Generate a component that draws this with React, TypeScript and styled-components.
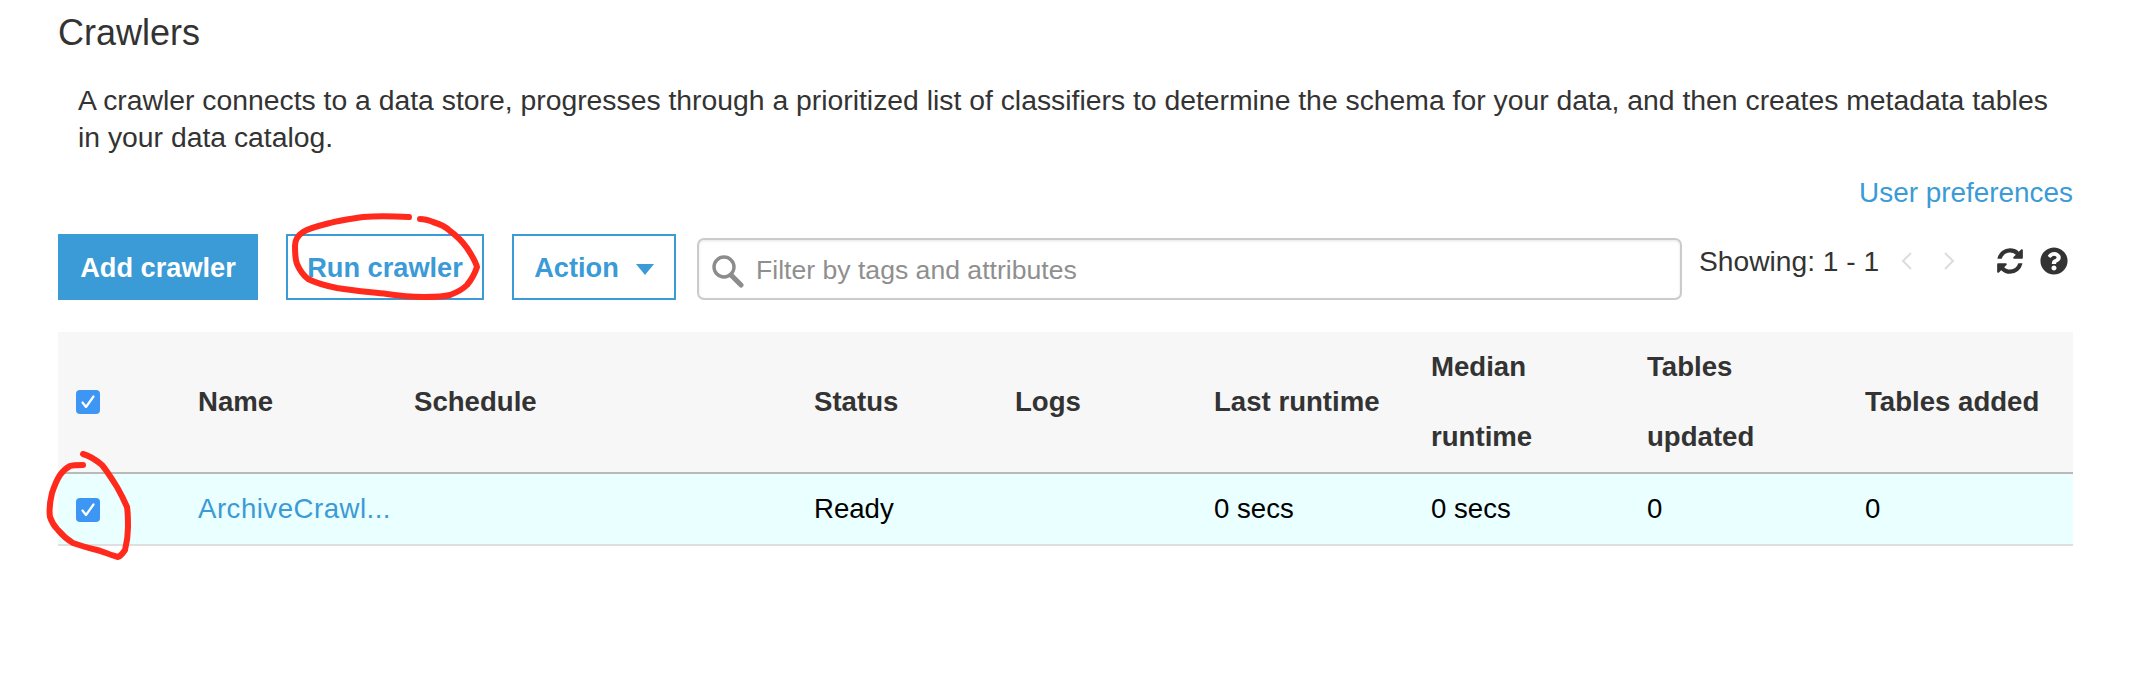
import React from "react";
import styled, { createGlobalStyle } from "styled-components";
import { FaQuestionCircle } from "react-icons/fa";

const BLUE = "#3a9bd6";
const COLUMNS = "140px 216px 400px 201px 199px 217px 216px 218px 208px";

const GlobalStyle = createGlobalStyle`
  html, body {
    margin: 0;
    background: #fff;
  }
  body {
    font-family: "Liberation Sans", Arial, sans-serif;
    font-size: 27.6px;
    color: #333;
  }
`;

const Page = styled.div`
  position: relative;
  box-sizing: border-box;
  width: 2132px;
  height: 686px;
  padding: 13px 59px 0 58px;
  overflow: hidden;
`;

const Title = styled.h1`
  margin: 0;
  font-size: 36px;
  font-weight: 400;
  line-height: 40px;
`;

const Description = styled.p`
  max-width: 1985px;
  margin: 29px 0 0 20px;
  font-size: 28.34px;
  line-height: 37px;
`;

const PrefsRow = styled.div`
  display: flex;
  justify-content: flex-end;
  margin-top: 18px;
  font-size: 27.9px;
  line-height: 37px;
`;

const TextLink = styled.a<{ $spread?: boolean }>`
  color: ${BLUE};
  text-decoration: none;
  letter-spacing: ${(p) => (p.$spread ? "0.5px" : "0")};
`;

const Toolbar = styled.div`
  display: flex;
  align-items: flex-start;
  height: 66px;
  margin-top: 23px;
`;

const Button = styled.button<{ $primary?: boolean; $width: number; $gap: number }>`
  box-sizing: border-box;
  display: flex;
  align-items: center;
  justify-content: center;
  gap: 17px;
  width: ${(p) => p.$width}px;
  height: 66px;
  margin: 0 ${(p) => p.$gap}px 0 0;
  padding: 2px 0 0;
  font: bold 27.2px "Liberation Sans", Arial, sans-serif;
  color: ${(p) => (p.$primary ? "#fff" : BLUE)};
  background: ${(p) => (p.$primary ? BLUE : "#fff")};
  border: 2px solid ${BLUE};
`;

const Caret = styled.span`
  width: 0;
  height: 0;
  margin-top: 2px;
  border-left: 9.5px solid transparent;
  border-right: 9.5px solid transparent;
  border-top: 11px solid ${BLUE};
`;

const SearchBox = styled.div`
  box-sizing: border-box;
  display: flex;
  align-items: center;
  gap: 11px;
  width: 985px;
  height: 62px;
  margin-top: 4px;
  padding: 2px 0 0 12px;
  border: 2px solid #cbcbcb;
  border-radius: 7px;
  box-shadow: inset 0 1px 3px rgba(0, 0, 0, 0.1);
  color: #8f8f8f;
  font-size: 26.6px;
`;

const SearchIcon = styled.svg`
  width: 34px;
  height: 34px;
  flex: none;
  margin-top: 2px;
`;

const Pager = styled.div`
  display: flex;
  align-items: center;
  height: 54px;
  margin-left: 17px;
`;

const Showing = styled.span`
  margin-right: 22px;
  font-size: 28.2px;
`;

const Chevron = styled.svg<{ $gap: number }>`
  width: 11px;
  height: 18px;
  margin-right: ${(p) => p.$gap}px;
  flex: none;
`;

const Tool = styled.span<{ $gap: number }>`
  display: flex;
  margin-right: ${(p) => p.$gap}px;
  color: #333;
  font-size: 28px;
`;

const RefreshIcon = styled.svg`
  width: 30px;
  height: 30px;
  fill: #333;
`;

const TableRow = styled.div<{ $head?: boolean }>`
  box-sizing: border-box;
  display: grid;
  grid-template-columns: ${COLUMNS};
  align-items: center;
  width: 2015px;
  height: ${(p) => (p.$head ? 142 : 72)}px;
  margin-top: ${(p) => (p.$head ? 32 : 0)}px;
  padding-bottom: ${(p) => (p.$head ? 1 : 0)}px;
  background: ${(p) => (p.$head ? "#f7f7f7" : "#eaffff")};
  border-bottom: 2px solid ${(p) => (p.$head ? "#b9b9b9" : "#dfdfdf")};
`;

const HeadCell = styled.div`
  font-weight: bold;
  font-size: 27.6px;
  line-height: 70px;
  color: #333;
`;

const Cell = styled.div`
  color: #000;
`;

const CheckCell = styled.div<{ $drop?: number }>`
  display: flex;
  padding: ${(p) => p.$drop ?? 0}px 0 0 18px;
`;

const CheckBox = styled.span`
  display: flex;
  align-items: center;
  justify-content: center;
  width: 24px;
  height: 24px;
  border-radius: 4px;
  background: #3d96f4;
`;

const Annotations = styled.svg`
  position: absolute;
  left: 0;
  top: 0;
  width: 2132px;
  height: 686px;
  pointer-events: none;
`;

const Scribble = styled.path`
  fill: none;
  stroke: #ff2a1c;
  stroke-width: 6;
  stroke-linecap: round;
  stroke-linejoin: round;
`;

function Check() {
  return (
    <CheckBox>
      <svg width="16" height="16" viewBox="0 0 16 16">
        <path d="M2.5 8.5 L6 13 L13.5 2.5" fill="none" stroke="#fff" strokeWidth="2.2" strokeLinecap="round" strokeLinejoin="round" />
      </svg>
    </CheckBox>
  );
}

export default function App() {
  return (
    <Page>
      <GlobalStyle />
      <Title>Crawlers</Title>
      <Description>
        A crawler connects to a data store, progresses through a prioritized list of classifiers to determine the schema for your data, and then creates metadata tables in your data catalog.
      </Description>
      <PrefsRow>
        <TextLink>User preferences</TextLink>
      </PrefsRow>
      <Toolbar>
        <Button $primary $width={200} $gap={28}>Add crawler</Button>
        <Button $width={198} $gap={28}>Run crawler</Button>
        <Button $width={164} $gap={21}>
          Action
          <Caret />
        </Button>
        <SearchBox>
          <SearchIcon viewBox="0 0 34 34">
            <circle cx="13" cy="13" r="10" fill="none" stroke="#8c8c8c" strokeWidth="3.4" />
            <path d="M20 21 L30 31" stroke="#8c8c8c" strokeWidth="5" strokeLinecap="round" />
          </SearchIcon>
          Filter by tags and attributes
        </SearchBox>
        <Pager>
          <Showing>Showing: 1 - 1</Showing>
          <Chevron $gap={32} viewBox="0 0 11 18">
            <path d="M10 1 L2 9 L10 17" fill="none" stroke="#dcdcdc" strokeWidth="2" />
          </Chevron>
          <Chevron $gap={40} viewBox="0 0 11 18">
            <path d="M1 1 L9 9 L1 17" fill="none" stroke="#dcdcdc" strokeWidth="2" />
          </Chevron>
          <Tool $gap={15}>
            <RefreshIcon viewBox="0 0 1792 1792">
              <path d="M1639 1056q0 5-1 7-64 268-268 434.5t-478 166.5q-146 0-282.5-55t-243.5-157l-129 129q-19 19-45 19t-45-19-19-45v-448q0-26 19-45t45-19h448q26 0 45 19t19 45-19 45l-137 137q71 66 161 102t187 36q134 0 250-65t186-179q11-17 53-117 8-23 30-23h192q13 0 22.5 9.5t9.5 22.5zm25-800v448q0 26-19 45t-45 19h-448q-26 0-45-19t-19-45 19-45l138-138q-148-137-349-137-134 0-250 65t-186 179q-11 17-53 117-8 23-30 23h-199q-13 0-22.5-9.5t-9.5-22.5v-7q65-268 270-434.5t480-166.5q146 0 284 55.5t245 156.5l130-129q19-19 45-19t45 19 19 45z" />
            </RefreshIcon>
          </Tool>
          <Tool $gap={0}><FaQuestionCircle /></Tool>
        </Pager>
      </Toolbar>
      <TableRow $head>
        <CheckCell><Check /></CheckCell>
        <HeadCell>Name</HeadCell>
        <HeadCell>Schedule</HeadCell>
        <HeadCell>Status</HeadCell>
        <HeadCell>Logs</HeadCell>
        <HeadCell>Last runtime</HeadCell>
        <HeadCell>Median<br />runtime</HeadCell>
        <HeadCell>Tables<br />updated</HeadCell>
        <HeadCell>Tables added</HeadCell>
      </TableRow>
      <TableRow>
        <CheckCell $drop={2}><Check /></CheckCell>
        <Cell><TextLink $spread>ArchiveCrawl...</TextLink></Cell>
        <Cell />
        <Cell>Ready</Cell>
        <Cell />
        <Cell>0 secs</Cell>
        <Cell>0 secs</Cell>
        <Cell>0</Cell>
        <Cell>0</Cell>
      </TableRow>
      <Annotations viewBox="0 0 2132 686">
        <Scribble d="M409 217 C390 216 375 216 363 217 C350 219 340 220 330 223 C318 226 309 228 303 232 C297 236 295 240 295 246 C295 254 295 259 297 264 C300 271 303 275 308 279 C318 284 327 286 337 288 C355 291 370 292 387 294 C400 296 412 297 424 297 C435 297 443 297 450 295 C458 292 463 289 467 285 C472 279 475 273 477 267 C475 260 471 254 467 248 C462 241 457 236 450 231 C446 227 440 224 433 222 C428 220 424 219 420 219" />
        <Scribble d="M83 465 C77 465 73 465 70 466 C66 468 63 471 60 475 C56 481 54 487 52 493 C50 501 49 510 50 517 C52 523 55 527 58 530 C63 536 68 540 73 543 C81 546 89 548 97 550 C104 552 111 555 118 557 C121 556 123 553 125 550 C127 542 128 535 128 527 C128 520 128 513 127 507 C124 500 121 494 117 487 C112 479 107 471 102 465 C96 460 90 456 83 454" />
      </Annotations>
    </Page>
  );
}
